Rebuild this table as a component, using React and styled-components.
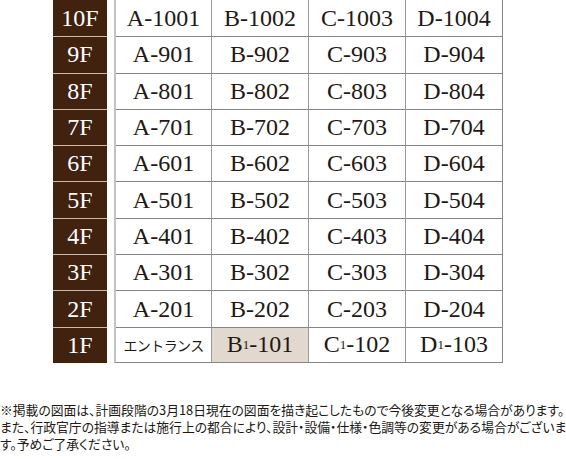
import React from 'react';
import styled, { createGlobalStyle } from 'styled-components';

const GlobalStyle = createGlobalStyle`
  html, body {
    margin: 0;
    padding: 0;
    background: #fff;
  }
`;

const Page = styled.div`
  width: 566px;
  height: 459px;
  overflow: hidden;
  color: #231815;
`;

const Plan = styled.div`
  display: flex;
  flex-direction: column;
  padding-left: 53px;
`;

const Row = styled.div`
  display: flex;
  height: 36.3px;
`;

const Floor = styled.div`
  width: 54px;
  box-sizing: border-box;
  margin-right: 7px;
  background: #40220f;
  border-top: ${p => (p.$first ? 'none' : '1px solid #cdb9a6')};
  color: #fff;
  font-family: "Liberation Serif", "Times New Roman", serif;
  font-size: 24px;
  display: flex;
  align-items: center;
  justify-content: center;
`;

const Units = styled.div`
  display: flex;
  border-left: 2px solid #c2c2c2;
  border-right: 1px solid #858585;
  border-bottom: ${p => (p.$last ? '1px solid #858585' : 'none')};
`;

const Unit = styled.div`
  width: ${p => (p.$first ? '95px' : '96px')};
  border-left: ${p => (p.$first ? 'none' : '1px solid #9a9a9a')};
  border-top: ${p => (p.$top ? 'none' : '1px solid #858585')};
  background: ${p => (p.$highlight ? '#e1d9ce' : '#fff')};
  display: flex;
  align-items: center;
  justify-content: center;
  font-family: "Liberation Serif", "Times New Roman", serif;
  font-size: 24px;
  white-space: nowrap;
`;

const Entrance = styled.span`
  font-family: "Noto Sans CJK JP", sans-serif;
  font-size: 14px;
  letter-spacing: -0.6px;
`;

const Sub = styled.span`
  font-size: 13px;
`;

const Note = styled.p`
  margin: 38px 0 0;
  font-family: "Noto Sans CJK JP", sans-serif;
  font-size: 12.8px;
  line-height: 17px;
  font-feature-settings: "palt";
  width: 574px;
`;

const floors = [10, 9, 8, 7, 6, 5, 4, 3, 2];
const letters = ['A', 'B', 'C', 'D'];

const ground = [
  { key: 'e', label: <Entrance>エントランス</Entrance> },
  { key: 'b', label: <>B<Sub>1</Sub>-101</>, highlight: true },
  { key: 'c', label: <>C<Sub>1</Sub>-102</> },
  { key: 'd', label: <>D<Sub>1</Sub>-103</> },
];

export default function App() {
  return (
    <Page>
      <GlobalStyle />
      <Plan>
        {floors.map((f, i) => (
          <Row key={f}>
            <Floor $first={i === 0}>{f}F</Floor>
            <Units>
              {letters.map((l, j) => (
                <Unit key={l} $first={j === 0} $top={i === 0}>
                  {l}-{f}0{j + 1}
                </Unit>
              ))}
            </Units>
          </Row>
        ))}
        <Row>
          <Floor>1F</Floor>
          <Units $last>
            {ground.map((g, j) => (
              <Unit key={g.key} $first={j === 0} $highlight={g.highlight}>
                {g.label}
              </Unit>
            ))}
          </Units>
        </Row>
      </Plan>
      <Note>
        ※掲載の図面は、計画段階の3月18日現在の図面を描き起こしたもので今後変更となる場合があります。<br />
        また、行政官庁の指導または施行上の都合により、設計・設備・仕様・色調等の変更がある場合がございます。予めご了承ください。
      </Note>
    </Page>
  );
}
